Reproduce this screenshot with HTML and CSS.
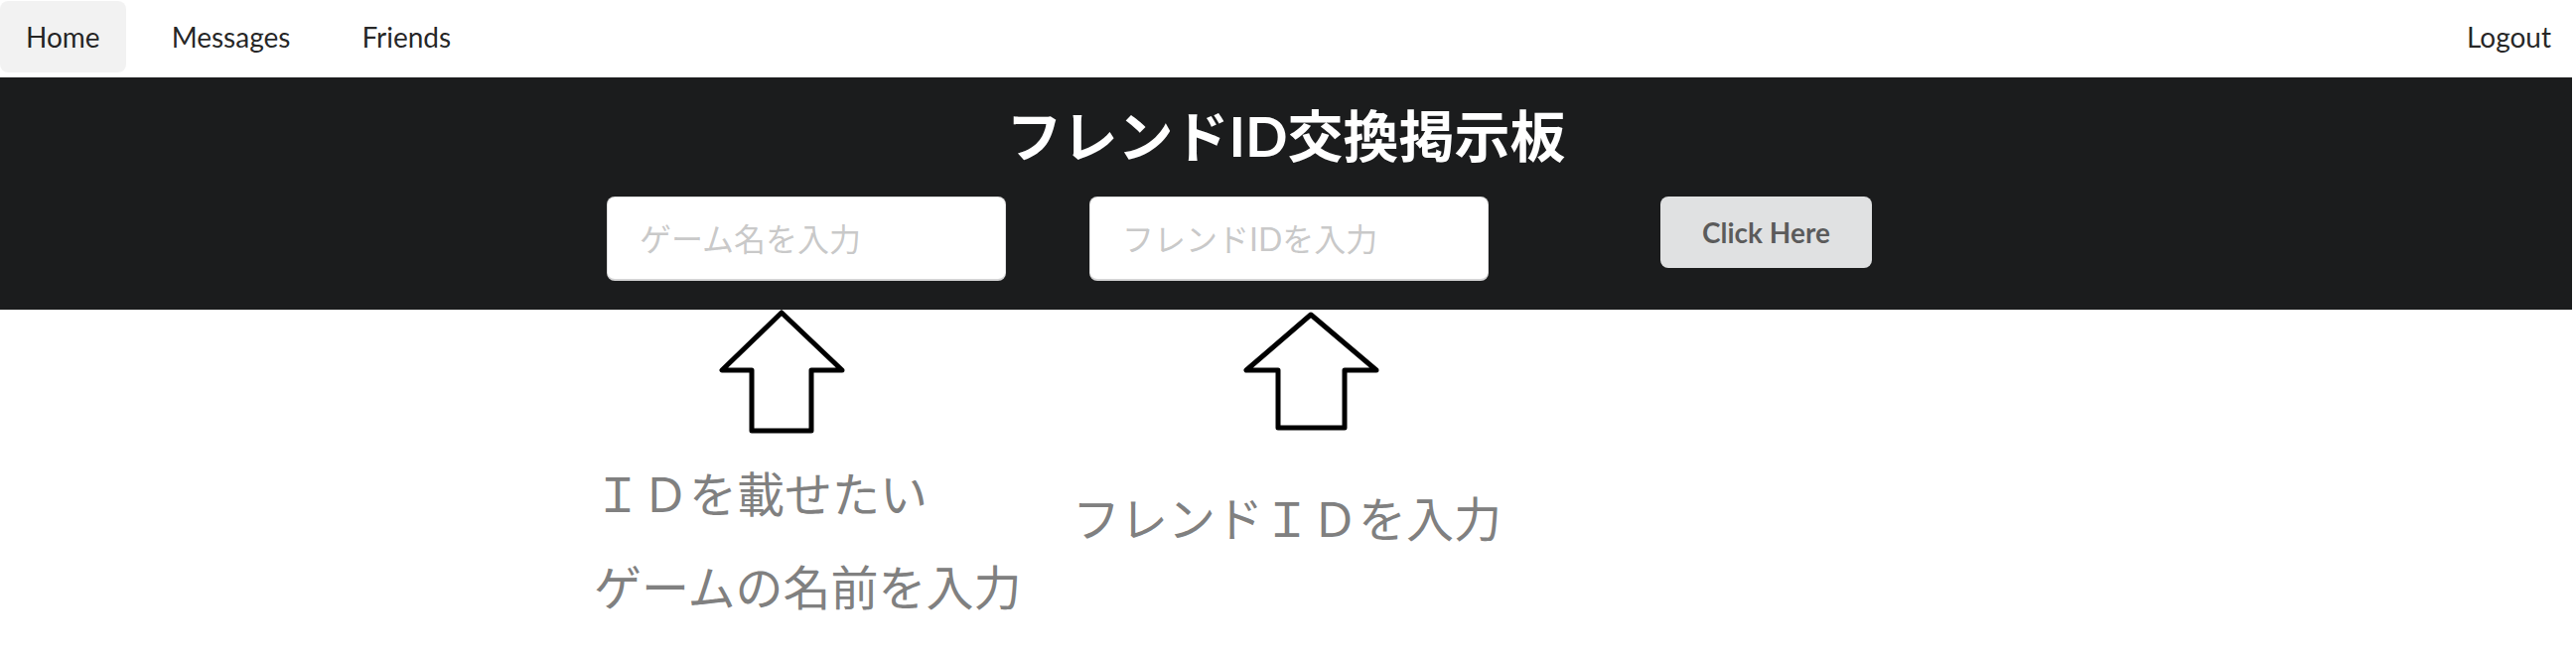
FILE: index.html
```html
<!DOCTYPE html>
<html lang="ja">
<head>
<meta charset="utf-8">
<title>フレンドID交換掲示板</title>
<link rel="stylesheet" href="styles.css">
</head>
<body>
<nav class="menu">
  <a class="item active">Home</a>
  <a class="item">Messages</a>
  <a class="item">Friends</a>
  <div class="right"><a class="item">Logout</a></div>
</nav>
<section class="banner">
  <h1 class="title">フレンドID交換掲示板</h1>
  <form class="row">
    <input class="field" type="text" placeholder="ゲーム名を入力">
    <input class="field second" type="text" placeholder="フレンドIDを入力">
    <button class="btn" type="button">Click Here</button>
  </form>
</section>
<div class="guide">
  <svg class="guide-art" width="940" height="352" viewBox="0 0 940 352">
    <path class="arrow" d="M197 3 L137 61 L167 61 L167 122 L227 122 L227 61 L258 61 Z"/>
    <path class="arrow" d="M730 5 L665 61 L697 61 L697 119 L764 119 L764 61 L796 61 Z"/>
    <text class="note" x="8" y="204">ＩＤを載せたい</text>
    <text class="note" x="490" y="229">フレンドＩＤを入力</text>
    <text class="note" x="8" y="298">ゲームの名前を入力</text>
  </svg>
</div>
</body>
</html>
```
FILE: styles.css
```css
html, body {
  margin: 0;
  padding: 0;
  background: #ffffff;
}

body {
  font-family: Lato, "Noto Sans CJK JP", sans-serif;
  color: rgba(0, 0, 0, 0.87);
}

.menu {
  display: flex;
  align-items: flex-start;
  height: 78px;
}

.menu .item {
  display: block;
  margin: 1px 10px 0;
  height: 72px;
  padding: 0 26px;
  line-height: 72px;
  font-size: 28px;
  color: rgba(0, 0, 0, 0.87);
  border-radius: 8px;
  cursor: pointer;
}

.menu > .item:first-child {
  margin-left: 0;
}

.menu .item.active {
  background: rgba(0, 0, 0, 0.05);
}

.menu .right {
  margin-left: auto;
  display: flex;
}

.menu .right .item {
  margin-right: 0;
  padding-right: 25px;
}

.banner {
  background: #1b1c1d;
  margin-right: 4px;
  height: 234px;
  box-sizing: border-box;
  padding-top: 23px;
}

.title {
  margin: 0 0 25px;
  text-align: center;
  font-family: Lato, "Noto Sans CJK JP", sans-serif;
  font-weight: 700;
  font-size: 56px;
  line-height: 72px;
  color: #ffffff;
}

.row {
  display: flex;
  align-items: flex-start;
  padding-left: 611px;
  margin: 0;
}

.field {
  box-sizing: border-box;
  width: 402px;
  height: 85px;
  margin: 0;
  padding: 0 32px;
  font-family: Lato, "Noto Sans CJK JP", sans-serif;
  font-size: 32px;
  color: rgba(0, 0, 0, 0.87);
  background: #ffffff;
  border: 1px solid rgba(34, 36, 38, 0.15);
  border-bottom: 2px solid #d4d4d5;
  border-radius: 8px;
  outline: none;
}

.field::placeholder {
  color: rgba(191, 191, 191, 0.87);
}

.field.second {
  margin-left: 84px;
}

.btn {
  margin: 0 0 0 173px;
  height: 72px;
  padding: 0 42px;
  font-family: Lato, "Noto Sans CJK JP", sans-serif;
  font-weight: 700;
  font-size: 28px;
  line-height: 1;
  color: rgba(0, 0, 0, 0.6);
  background: #e0e1e2;
  border: none;
  border-radius: 8px;
  cursor: pointer;
}

.guide {
  padding-left: 590px;
}

.guide-art {
  display: block;
}

.arrow {
  fill: #ffffff;
  stroke: #000000;
  stroke-width: 5;
  stroke-linejoin: round;
}

.note {
  font-family: "Noto Sans CJK JP", sans-serif;
  font-size: 48px;
  fill: #808080;
}
```
